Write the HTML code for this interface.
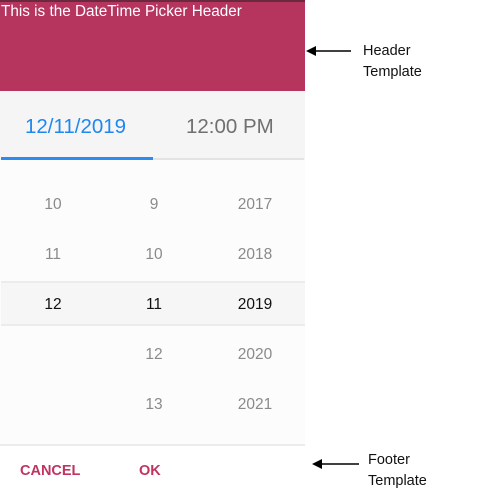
<!DOCTYPE html>
<html><head><style>
body{margin:0;width:493px;height:500px;background:#fff;position:relative;overflow:hidden;font-family:"Liberation Sans",sans-serif}
.a{position:absolute}
.n{position:absolute;width:100px;text-align:center;font-size:15.5px;color:#8a8a8a;line-height:18px}
.s{color:#111}
.lbl{position:absolute;font-size:14.5px;color:#111;line-height:21px}
</style></head><body>
<div class="a" style="left:0;top:0;width:305px;height:91px;background:#b5355f"></div>
<div class="a" style="left:0;top:0;width:305px;height:2px;background:#6a2a3e"></div>
<div class="a" style="left:1px;top:3px;color:#fff;font-size:15.3px">This is the DateTime Picker Header</div>
<div class="a" style="left:0;top:91px;width:305px;height:69px;background:#f5f5f5"></div>
<div class="a" style="left:25px;top:115px;font-size:20.5px;color:#1e88f0">12/11/2019</div>
<div class="a" style="left:186px;top:115px;font-size:20.5px;color:#707070">12:00 PM</div>
<div class="a" style="left:1px;top:158px;width:303px;height:2px;background:#e3e3e3"></div>
<div class="a" style="left:1px;top:157px;width:152px;height:3px;background:#2a8cf0"></div>
<div class="a" style="left:0;top:160px;width:305px;height:284px;background:#fcfcfc"></div>
<div class="a" style="left:1px;top:281px;width:304px;height:45px;background:#f6f6f6;border-top:2px solid #ececec;border-bottom:2px solid #ececec;box-sizing:border-box"></div>
<div class="a" style="left:0;top:444px;width:305px;height:2px;background:#ececec"></div>
<div class="n" style="left:3px;top:196px">10</div>
<div class="n" style="left:3px;top:246px">11</div>
<div class="n s" style="left:3px;top:296px">12</div>
<div class="n" style="left:104px;top:196px">9</div>
<div class="n" style="left:104px;top:246px">10</div>
<div class="n s" style="left:104px;top:296px">11</div>
<div class="n" style="left:104px;top:346px">12</div>
<div class="n" style="left:104px;top:396px">13</div>
<div class="n" style="left:205px;top:196px">2017</div>
<div class="n" style="left:205px;top:246px">2018</div>
<div class="n s" style="left:205px;top:296px">2019</div>
<div class="n" style="left:205px;top:346px">2020</div>
<div class="n" style="left:205px;top:396px">2021</div>
<div class="a" style="left:20px;top:463px;font-size:14.5px;color:#c0345f;font-weight:bold">CANCEL</div>
<div class="a" style="left:139px;top:463px;font-size:14.5px;color:#c0345f;font-weight:bold">OK</div>
<svg class="a" style="left:0;top:0" width="493" height="500">
<line x1="313" y1="51" x2="351" y2="51" stroke="#000" stroke-width="1.5"/>
<polygon points="306,51 316,46 316,56" fill="#000"/>
<line x1="320" y1="464" x2="359" y2="464" stroke="#000" stroke-width="1.5"/>
<polygon points="312,464 322,459 322,469" fill="#000"/>
</svg>
<div class="lbl" style="left:363px;top:41px">Header<br>Template</div>
<div class="lbl" style="left:368px;top:450px">Footer<br>Template</div>
</body></html>
